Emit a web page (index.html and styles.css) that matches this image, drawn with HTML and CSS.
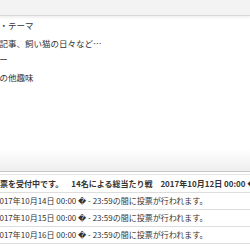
FILE: index.html
```html
<!DOCTYPE html>
<html lang="ja">
<head>
    <meta charset="UTF-8">
    <title>投票</title>
    <link rel="stylesheet" href="styles.css">
</head>
<body>

<div id="topbar"></div>

<dl id="profile">
    <dt>メイン・テーマ</dt>
    <dd>各記事、飼い猫の日々など…</dd>
    <dt>ユーザー</dt>
    <dd>その他趣味</dd>
</dl>

<div id="tabs"></div>

<table id="schedule">
    <tr class="head">
        <td>投票を受付中です。　14名による総当たり戦　2017年10月12日 00:00 &#xFFFD;</td>
    </tr>
    <tr>
        <td>2017年10月14日 00:00 &#xFFFD; - 23:59の間に投票が行われます。</td>
    </tr>
    <tr>
        <td>2017年10月15日 00:00 &#xFFFD; - 23:59の間に投票が行われます。</td>
    </tr>
    <tr>
        <td>2017年10月16日 00:00 &#xFFFD; - 23:59の間に投票が行われます。</td>
    </tr>
</table>

</body>
</html>
```

FILE: styles.css
```css
body {
    margin: 0;
    overflow: hidden;
    background-color: rgb(255, 255, 255);
    font-family: "Noto Sans CJK JP", "DejaVu Sans", sans-serif;
    color: rgb(51, 51, 51);
    white-space: nowrap;
}

#topbar {
    height: 15px;
    background-color: rgb(243, 243, 243);
    border-bottom: 1px solid rgb(216, 216, 216);
    box-shadow: 0 2px 2px rgba(0, 0, 0, 0.06);
}

#profile {
    margin: 1px 0 0 -26px;
    font-size: 8.5px;
}

#profile dt {
    line-height: 16px;
}

#profile dd {
    margin: 2px 0 0 17px;
    line-height: 16px;
}

#tabs {
    margin-top: 64px;
    height: 22px;
    background: linear-gradient(rgb(255, 255, 255), rgb(238, 238, 238));
    border-bottom: 1px solid rgb(200, 200, 200);
}

#schedule {
    margin: 2px 0 0 -5px;
    border-collapse: collapse;
    border-top: 1px solid rgb(228, 228, 228);
    font-size: 8px;
}

#schedule td {
    padding: 0 0 0 0;
    line-height: 16px;
    border-bottom: 1px solid rgb(221, 221, 221);
}

#schedule .head td {
    padding: 1px 0 0 0;
    font-weight: 700;
}

#schedule .head td {
    text-indent: -3px;
}
```
